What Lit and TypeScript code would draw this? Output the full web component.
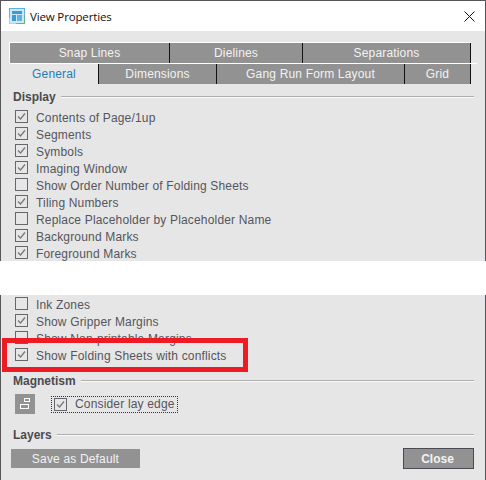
import { LitElement, html, css, svg } from "lit";
import { customElement } from "lit/decorators.js";

const top = [
  ["Contents of Page/1up", true],
  ["Segments", true],
  ["Symbols", true],
  ["Imaging Window", true],
  ["Show Order Number of Folding Sheets", false],
  ["Tiling Numbers", true],
  ["Replace Placeholder by Placeholder Name", false],
  ["Background Marks", true],
  ["Foreground Marks", true],
] as [string, boolean][];
const bottom = [
  ["Ink Zones", false],
  ["Show Gripper Margins", true],
  ["Show Non-printable Margins", false],
  ["Show Folding Sheets with conflicts", true],
] as [string, boolean][];

const box = (on: boolean) => html`<svg class="box" width="13" height="13" viewBox="0 0 13 13">
  <rect x="0.5" y="0.5" width="12" height="12" fill="none" stroke="#66666c"></rect>
  ${on ? svg`<path d="M3 6.5 L5.5 9 L10 3.5" fill="none" stroke="#77777c" stroke-width="1.3"></path>` : ""}
</svg>`;

@customElement("app-root")
export class AppRoot extends LitElement {
  static styles = css`
    :host { display: block; width: 486px; height: 480px; overflow: hidden; background: #fff; position: relative;
      font-family: "Liberation Sans", Arial, sans-serif; font-size: 12px; letter-spacing: 0.17px; color: #55555c; white-space: nowrap; }
    .sec { background: #e6e6e6; border-left: 1px solid #55555a; border-right: 1px solid #55555a; box-sizing: border-box; }
    .title { height: 31px; background: #fff; border-top: 1px solid #55555a; border-left: 1px solid #55555a; border-right: 1px solid #55555a;
      box-sizing: border-box; display: flex; align-items: center; padding: 0 10px 0 8px; gap: 5px; color: #111; letter-spacing: -0.15px; font-family: "Open Sans", "Liberation Sans", sans-serif; }
    .title .t { flex: 1; font-size: 11.5px; }
    .upper { height: 230px; padding: 11px 0 0 8px; }
    .trow { display: flex; height: 20px; width: 461px; background: #929292; color: #f2f2f2; }
    .trow1 { border-left: 1px solid #fff; border-top: 1px solid #fff; }
    .trow2 { margin-left: 1px; }
    .rule { height: 1px; background: #fff; width: 468px; }
    .tab { display: flex; align-items: center; justify-content: center; border-right: 1px solid #111; box-sizing: border-box; height: 100%; }
    .tab.sel { background: #e6e6e6; color: #1d80b8; }
    .heading { display: flex; align-items: center; gap: 5px; font-weight: 700; color: #4a4a50; letter-spacing: 0; margin-left: 4px; width: 461px; height: 14px; }
    .heading i { flex: 1; height: 2px; background: linear-gradient(#aeaeae 50%, #fafafa 50%); }
    .upper .heading { margin-top: 6px; }
    .rows { display: flex; flex-direction: column; margin: 5px 0 0 6px; }
    .row { display: flex; align-items: center; height: 17px; gap: 8px; }
    .box { flex: none; margin-bottom: 2px; }
    .band { height: 34px; background: #fff; }
    .lower { height: 185px; padding: 1px 0 0 8px; position: relative; }
    .lower .rows { margin-top: 0; }
    .lower .heading.mh { margin-top: 10px; }
    .mag { display: flex; align-items: center; margin: 6px 0 0 6px; gap: 16px; }
    .tool { width: 20px; height: 20px; background: #929292; display: block; }
    .focus { display: flex; align-items: center; gap: 8px; height: 17px; width: 127px; box-sizing: border-box; border: 1px dotted #333; padding-left: 2px; }
    .focus .box { margin-bottom: 0; }
    .lay { margin-top: 14px; }
    .btns { display: flex; justify-content: space-between; align-items: center; margin: 6px 0 0 2px; width: 463px; }
    .btn { background: #929292; color: #f2f2f2; display: flex; align-items: center; justify-content: center; }
    .save { width: 129px; height: 19px; padding-top: 1px; box-sizing: border-box; }
    .close { width: 71px; height: 21px; box-sizing: border-box; border: 1px solid #4a4a55; font-weight: 700; letter-spacing: 0; padding-right: 2px; }
    .mark { position: absolute; left: 2px; top: 338px; width: 246px; height: 34px; box-sizing: border-box; border: 5px solid #ed1c24; }
  `;

  render() {
    return html`
      <div class="title">
        <svg width="16" height="16" viewBox="0 0 16 16">
          <rect x="0.5" y="0.5" width="15" height="15" fill="#cfe6f5" stroke="#62b0dc"></rect>
          <rect x="3" y="3" width="10" height="3" fill="#3b9ad6"></rect>
          <rect x="3" y="7" width="4" height="6" fill="#3b9ad6"></rect>
          <rect x="8" y="7" width="5" height="6" fill="#5fb3e3"></rect>
          <path d="M0.5 10 V15.5 H7" fill="none" stroke="#f2cf55"></path>
          <path d="M9 15.5 H15.5 V9" fill="none" stroke="#6db56d"></path>
        </svg>
        <span class="t">View Properties</span>
        <svg width="11" height="11" viewBox="0 0 11 11"><path d="M0.5 0.5 L10.5 10.5 M10.5 0.5 L0.5 10.5" stroke="#111" stroke-width="1"></path></svg>
      </div>
      <div class="sec upper">
        <div class="tabs">
          <div class="trow trow1">
            <div class="tab" style="width:160px">Snap Lines</div>
            <div class="tab" style="width:133px">Dielines</div>
            <div class="tab" style="width:168px">Separations</div>
          </div>
          <div class="rule"></div>
          <div class="trow trow2">
            <div class="tab sel" style="width:89px">General</div>
            <div class="tab" style="width:118px">Dimensions</div>
            <div class="tab" style="width:188px">Gang Run Form Layout</div>
            <div class="tab" style="width:66px">Grid</div>
          </div>
        </div>
        <div class="heading"><span>Display</span><i></i></div>
        <div class="rows">
          ${top.map(([t, c]) => html`<div class="row">${box(c)}<span>${t}</span></div>`)}
        </div>
      </div>
      <div class="band"></div>
      <div class="sec lower">
        <div class="rows">
          ${bottom.map(([t, c]) => html`<div class="row">${box(c)}<span>${t}</span></div>`)}
        </div>
        <div class="heading mh"><span>Magnetism</span><i></i></div>
        <div class="mag">
          <svg class="tool" viewBox="0 0 20 20">
            <rect x="9.5" y="4.5" width="5" height="3" fill="none" stroke="#fff"></rect>
            <rect x="5.5" y="10.5" width="8" height="4" fill="none" stroke="#fff"></rect>
          </svg>
          <div class="focus">${box(true)}<span>Consider lay edge</span></div>
        </div>
        <div class="heading lay"><span>Layers</span><i></i></div>
        <div class="btns">
          <div class="btn save">Save as Default</div>
          <div class="btn close">Close</div>
        </div>
      </div>
      <div class="mark"></div>
    `;
  }
}
